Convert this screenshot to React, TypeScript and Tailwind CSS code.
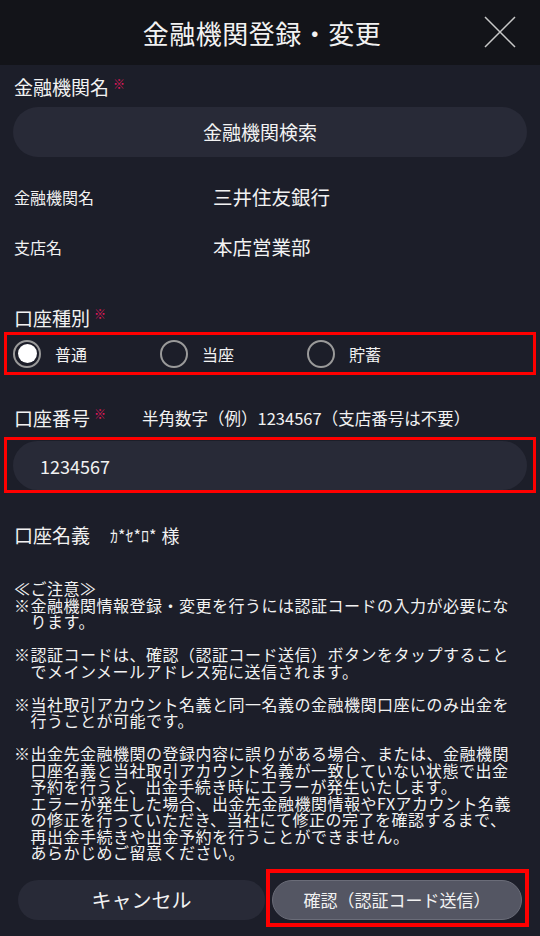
import { useState } from 'react';

const notes = [
  ['≪ご注意≫', '※金融機関情報登録・変更を行うには認証コードの入力が必要にな', '　ります。'],
  ['※認証コードは、確認（認証コード送信）ボタンをタップすること', '　でメインメールアドレス宛に送信されます。'],
  ['※当社取引アカウント名義と同一名義の金融機関口座にのみ出金を', '　行うことが可能です。'],
  [
    '※出金先金融機関の登録内容に誤りがある場合、または、金融機関',
    '　口座名義と当社取引アカウント名義が一致していない状態で出金',
    '　予約を行うと、出金手続き時にエラーが発生いたします。',
    '　エラーが発生した場合、出金先金融機関情報やFXアカウント名義',
    '　の修正を行っていただき、当社にて修正の完了を確認するまで、',
    '　再出金手続きや出金予約を行うことができません。',
    '　あらかじめご留意ください。',
  ],
];

function Required() {
  return <span className="ml-[4px] self-start mt-[2px] text-[12px] leading-[14px] text-[#e6185f]">※</span>;
}

export default function App() {
  const [kind, setKind] = useState('普通');
  const [num, setNum] = useState('1234567');

  return (
    <div className="min-h-[936px] w-[540px] bg-[#1c1e29] font-['Noto_Sans_CJK_JP','Noto_Sans',sans-serif] text-[#f2f2f2]">
      {/* header */}
      <div className="relative flex h-[65px] items-center justify-center bg-[#131419]">
        <h1 className="pr-[16px] text-[26px] leading-[32px] tracking-[0.5px]">金融機関登録・変更</h1>
        <button className="absolute right-[24px] top-[16px] h-[32px] w-[32px]">
          <svg viewBox="0 0 32 32" className="h-[32px] w-[32px]" fill="none" stroke="#c8c8c8" strokeWidth="1.5">
            <path d="M1 1 L31 31 M31 1 L1 31" />
          </svg>
        </button>
      </div>

      <div className="flex flex-col pt-[10px]">
        <div className="flex items-center px-[14px] text-[19px] leading-[24px]">
          金融機関名
          <Required />
        </div>
        <button className="mx-[13px] mt-[8px] h-[50px] rounded-full bg-[#282a37] pr-[20px] text-[19px]">金融機関検索</button>

        <div className="mt-[15px] flex h-[50px] items-center px-[14px]">
          <span className="w-[199px] text-[16px]">金融機関名</span>
          <span className="text-[19.5px]">三井住友銀行</span>
        </div>
        <div className="flex h-[50px] items-center px-[14px]">
          <span className="w-[199px] text-[16px]">支店名</span>
          <span className="text-[19.5px]">本店営業部</span>
        </div>

        <div className="mt-[33px] flex items-center px-[14px] text-[19px] leading-[26px]">
          口座種別
          <Required />
        </div>
        <div className="mx-[4px] mt-[1px] flex h-[43px] items-center border-[3px] border-[#ff0000] pl-[6px]">
          {['普通', '当座', '貯蓄'].map((k) => (
            <label key={k} className="flex w-[147px] cursor-pointer items-center" onClick={() => setKind(k)}>
              <span className="flex h-[28px] w-[28px] items-center justify-center rounded-full border-2 border-[#9a9a9a]">
                {kind === k && <span className="h-[19px] w-[19px] rounded-full bg-white" />}
              </span>
              <span className="ml-[14px] text-[16px]">{k}</span>
            </label>
          ))}
        </div>

        <div className="mt-[30px] flex items-center px-[14px] leading-[26px]">
          <span className="text-[19px]">口座番号</span>
          <Required />
          <span className="ml-[36px] text-[16.5px]">半角数字（例）1234567（支店番号は不要）</span>
        </div>
        <div className="mx-[4px] mt-[6px] border-[3px] border-[#ff0000] px-[6px] pt-[1px]">
          <input
            value={num}
            onChange={(e) => setNum(e.target.value)}
            className="h-[49px] w-full rounded-full bg-[#282a37] px-[27px] text-[18px] text-[#f2f2f2] outline-none"
          />
        </div>

        <div className="mt-[30px] flex items-center px-[14px] leading-[24px]">
          <span className="text-[19px]">口座名義</span>
          <span className="ml-[20px] text-[16px]">ｶ*ｾ*ﾛ*</span>
          <span className="ml-[5px] text-[18px]">様</span>
        </div>

        <div className="mt-[33px] flex flex-col gap-[16.5px] whitespace-nowrap px-[14px] text-[16px] leading-[16.5px] tracking-[0.5px]">
          {notes.map((p, i) => (
            <div key={i}>
              {p.map((line, j) => (
                <div key={j}>{line}</div>
              ))}
            </div>
          ))}
        </div>

        <div className="mt-[8px] flex items-start pl-[18px]">
          <button className="mt-[11px] h-[40px] w-[247px] rounded-full bg-[#282a37] text-[20px]">キャンセル</button>
          <div className="ml-[1px] h-[58px] w-[263px] border-4 border-[#ff0000] px-[2px] pt-[7px]">
            <button className="h-[40px] w-[250px] rounded-full border border-[#6a6c78] bg-[#545663] text-[17px]">
              確認（認証コード送信）
            </button>
          </div>
        </div>
      </div>
    </div>
  );
}
